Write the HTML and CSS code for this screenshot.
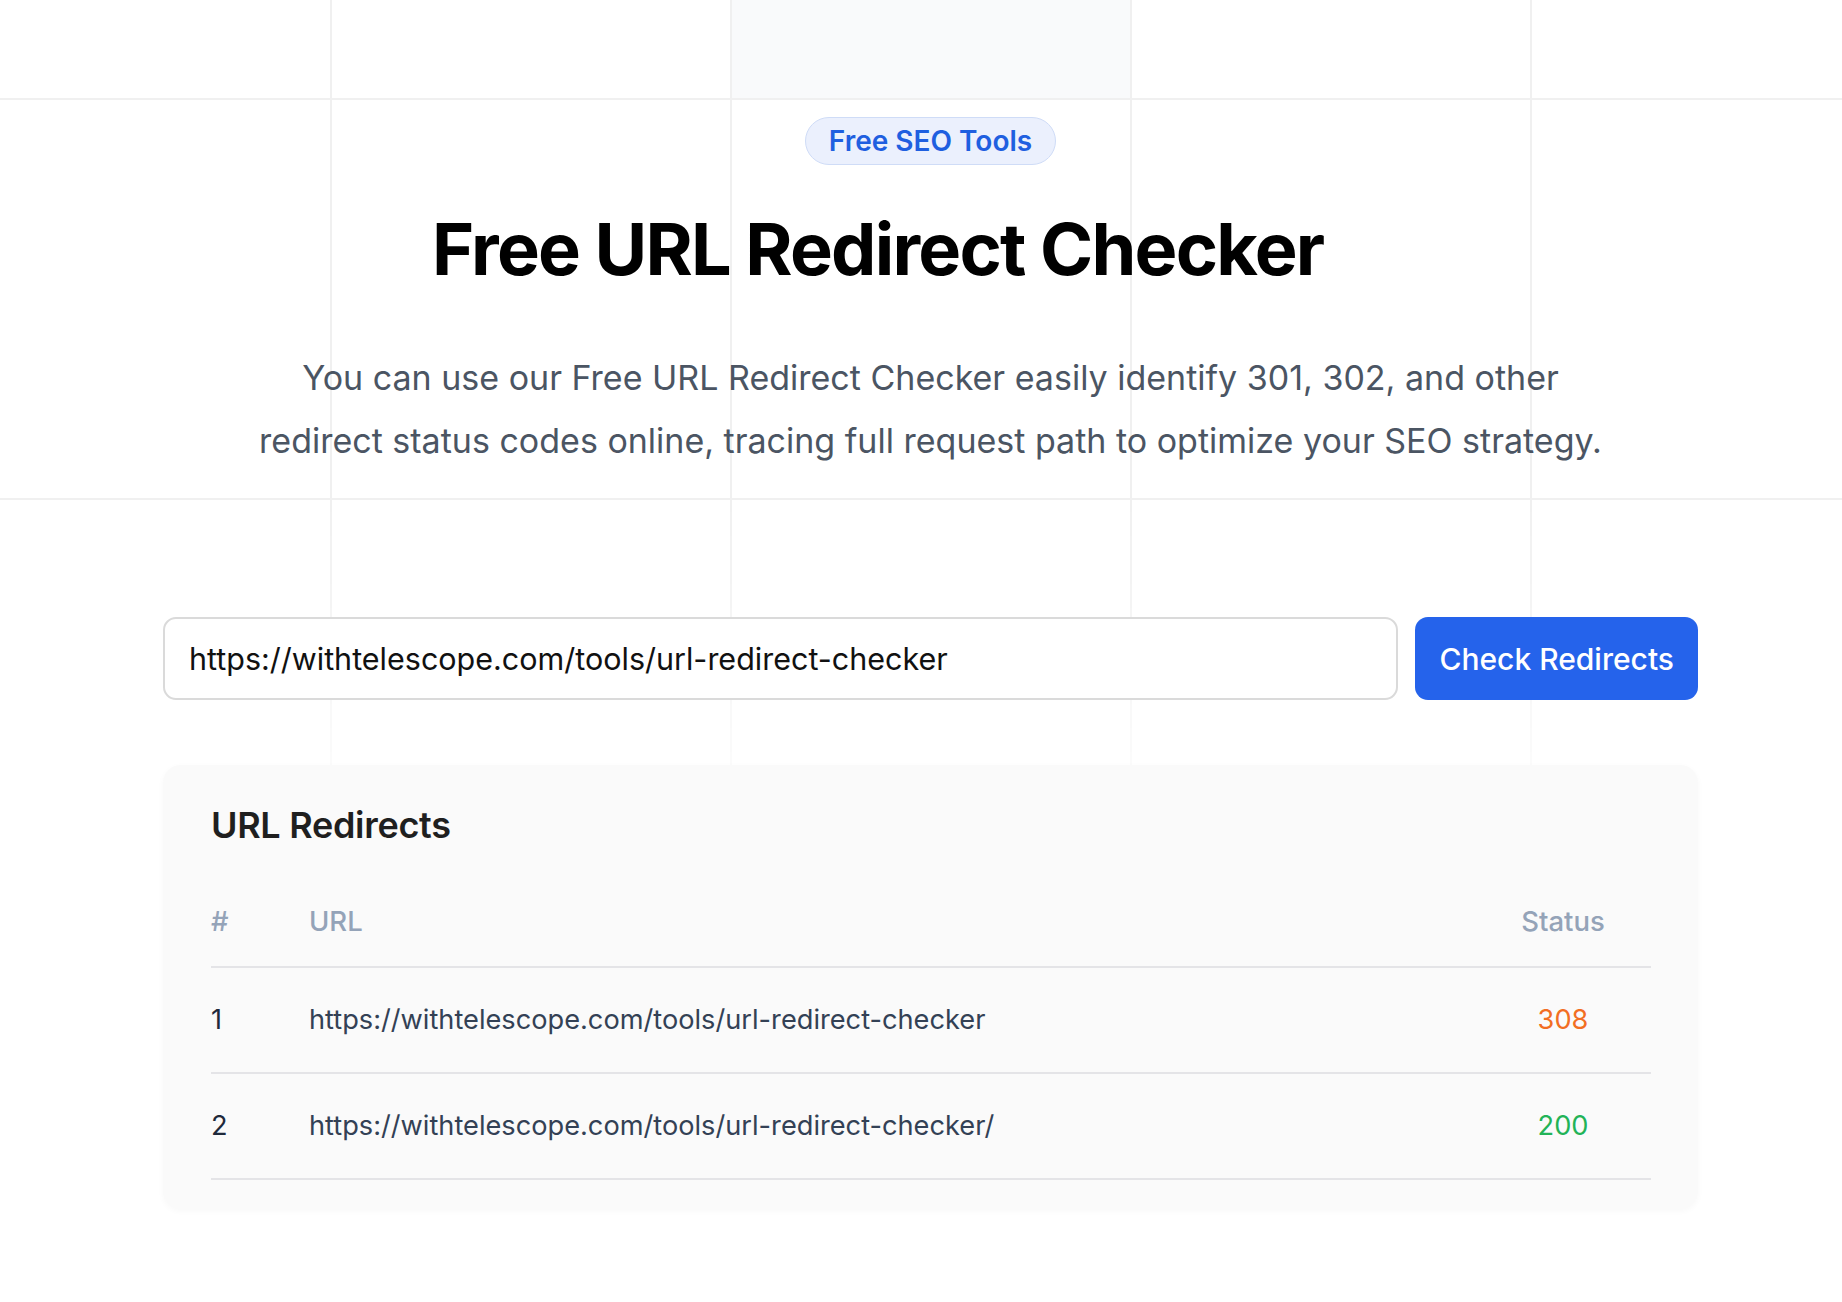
FILE: index.html
```html
<!DOCTYPE html>
<html lang="en">
<head>
<meta charset="utf-8">
<title>Free URL Redirect Checker</title>
<link rel="stylesheet" href="styles.css">
</head>
<body>
<div class="grid-bg" aria-hidden="true"></div>
<div class="grid-cell" aria-hidden="true"></div>
<main class="page">
  <section class="hero">
    <span class="badge">Free SEO Tools</span>
    <h1 class="title">Free URL Redirect Checker</h1>
    <p class="lead">You can use our Free URL Redirect Checker easily identify 301, 302, and other redirect status codes online, tracing full request path to optimize your SEO strategy.</p>
  </section>
  <form class="checker" onsubmit="return false">
    <input class="url-input" type="text" value="https://withtelescope.com/tools/url-redirect-checker">
    <button class="check-btn" type="submit">Check Redirects</button>
  </form>
  <section class="card">
    <h2 class="card-title">URL Redirects</h2>
    <table class="redirects">
      <thead>
        <tr><th class="col-num">#</th><th class="col-url">URL</th><th class="col-status">Status</th></tr>
      </thead>
      <tbody>
        <tr><td class="col-num">1</td><td class="col-url">https://withtelescope.com/tools/url-redirect-checker</td><td class="col-status status-redirect">308</td></tr>
        <tr><td class="col-num">2</td><td class="col-url">https://withtelescope.com/tools/url-redirect-checker/</td><td class="col-status status-ok">200</td></tr>
      </tbody>
    </table>
  </section>
</main>
</body>
</html>
```

FILE: styles.css
```css
* { box-sizing: border-box; }

html, body {
  margin: 0;
  padding: 0;
  background: #ffffff;
  font-family: Inter, "Noto Sans", "Liberation Sans", sans-serif;
  color: #111827;
}

body {
  position: relative;
  min-height: 1302px;
}

.grid-bg {
  position: absolute;
  left: 0;
  top: 0;
  width: 100%;
  height: 1000px;
  background-image:
    linear-gradient(to right, #f0f0f0 0, #f0f0f0 2px, transparent 2px),
    linear-gradient(to bottom, #f0f0f0 0, #f0f0f0 2px, transparent 2px);
  background-size: 400px 400px;
  background-position: 330px 98px;
  -webkit-mask-image: linear-gradient(to bottom, #000 0, #000 500px, transparent 860px);
  mask-image: linear-gradient(to bottom, #000 0, #000 500px, transparent 860px);
  z-index: 0;
}

.grid-cell {
  position: absolute;
  left: 732px;
  top: 0;
  width: 398px;
  height: 98px;
  background: #f9fafb;
  z-index: 0;
}

.page {
  position: relative;
  z-index: 1;
  width: 1535px;
  margin-left: 163px;
  padding-top: 117px;
  padding-bottom: 90px;
}

.hero {
  display: flex;
  flex-direction: column;
  align-items: center;
}

.badge {
  display: inline-flex;
  align-items: center;
  justify-content: center;
  height: 48px;
  padding: 0 23px;
  border: 1.5px solid #cfdcf7;
  border-radius: 999px;
  background: #ebf0fd;
  color: #1f5fe0;
  font-size: 28px;
  font-weight: 600;
  letter-spacing: 0;
}

.title {
  align-self: flex-start;
  margin: 48px 0 0 269px;
  font-size: 72px;
  line-height: 72px;
  font-weight: 700;
  letter-spacing: -1.75px;
  color: #000000;
}

.lead {
  margin: 61px 0 0;
  max-width: 1362px;
  text-align: center;
  font-size: 34px;
  line-height: 63px;
  font-weight: 400;
  color: #4b5563;
  letter-spacing: 0;
}

.checker {
  display: flex;
  gap: 17px;
  margin-top: 145px;
}

.url-input {
  flex: 1;
  height: 83px;
  padding: 0 24px;
  border: 2px solid #dadada;
  border-radius: 13px;
  background: #ffffff;
  font-family: inherit;
  font-size: 30.5px;
  color: #111111;
  outline: none;
}

.check-btn {
  height: 83px;
  padding: 0 24px;
  border: none;
  border-radius: 13px;
  background: #2563eb;
  color: #ffffff;
  font-family: inherit;
  font-size: 30px;
  font-weight: 500;
  cursor: pointer;
}

.card {
  margin-top: 65px;
  padding: 38px 47px 29px 48px;
  border-radius: 18px;
  background: #fafafa;
  box-shadow: 0 2px 6px rgba(0, 0, 0, 0.03);
}

.card-title {
  margin: 0;
  font-size: 36px;
  line-height: 44px;
  font-weight: 600;
  color: #1f1f1f;
  letter-spacing: -0.3px;
}

.redirects {
  width: 100%;
  margin-top: 29px;
  border-collapse: collapse;
}

.redirects th,
.redirects td {
  line-height: 40px;
  text-align: left;
  border-bottom: 2px solid #e4e4e7;
}

.redirects th {
  padding: 25px 0;
  font-size: 27.5px;
  font-weight: 500;
  color: #94a3b8;
}

.redirects td {
  padding: 32px 0;
  font-size: 27.2px;
  font-weight: 400;
  color: #1e293b;
}

.redirects .col-num { width: 98px; }

.redirects .col-url { color: #334155; }
.redirects th.col-url { color: #94a3b8; }

.redirects .col-status {
  width: 176px;
  text-align: center;
}

.redirects .status-redirect { color: #f26e22; }
.redirects .status-ok { color: #22b357; }
```
